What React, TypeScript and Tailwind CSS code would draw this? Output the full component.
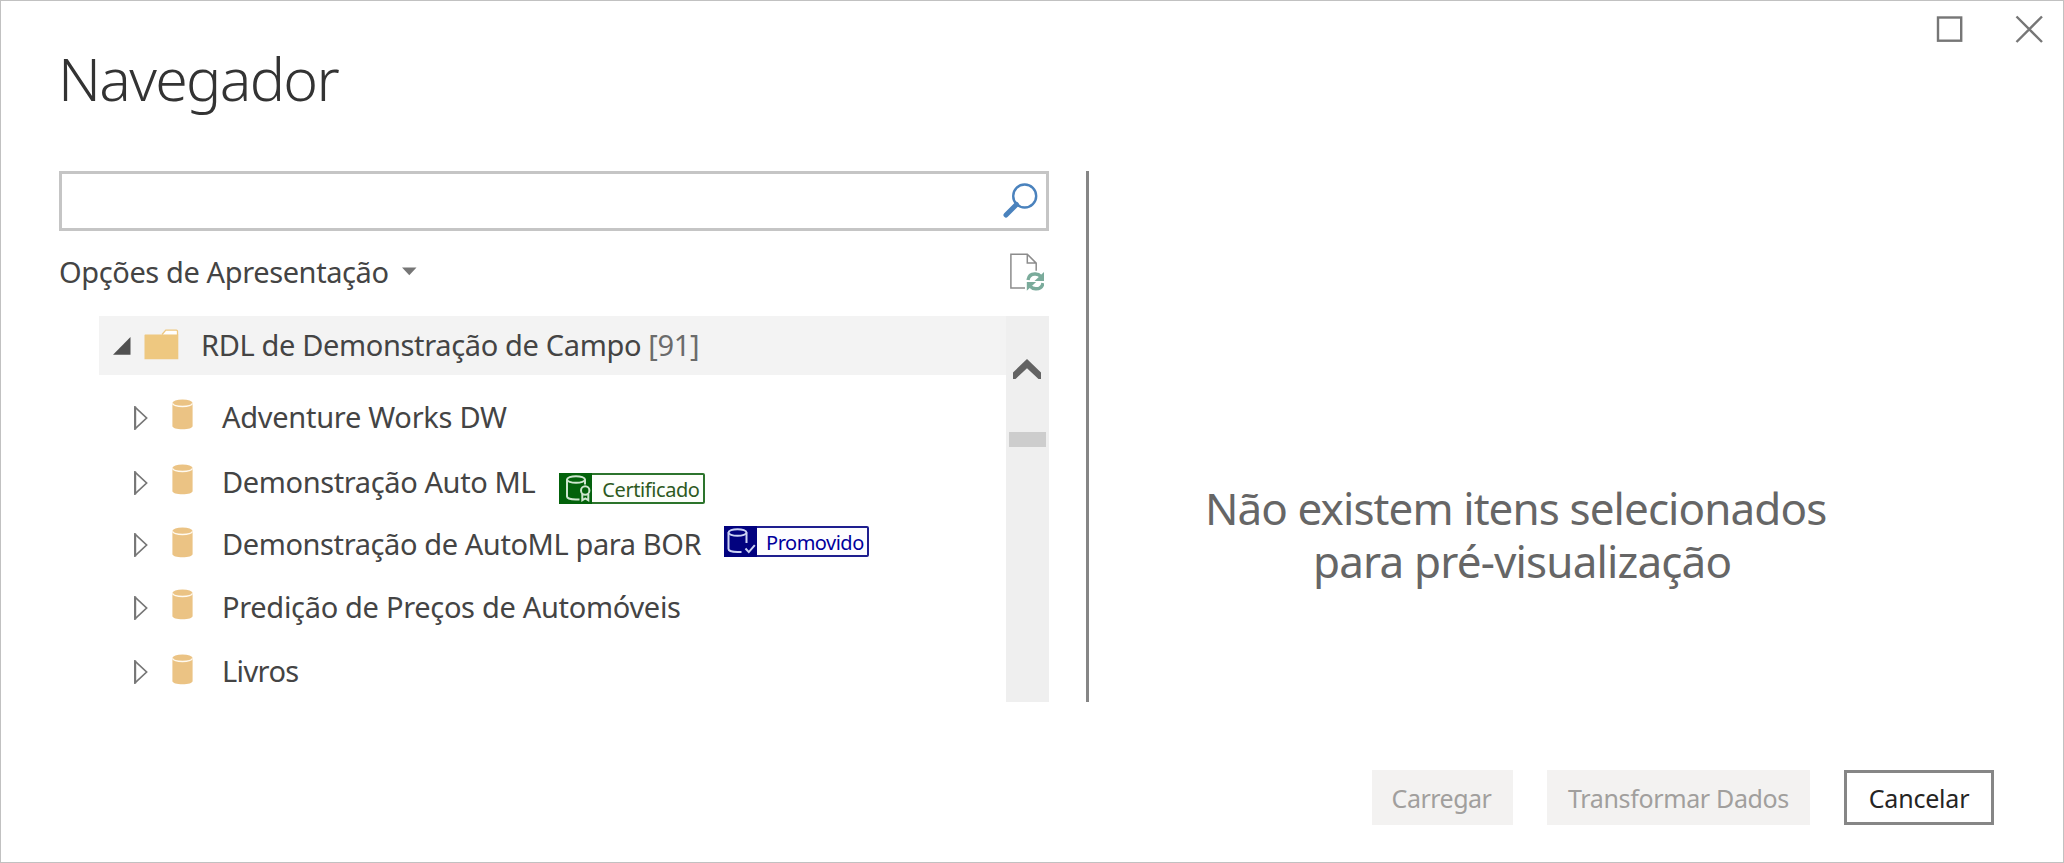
import React from "react";

type Dataset = {
  name: string;
  tracking: string;
  rowMargin: string;
  iconMargin: string;
  badge?: "certified" | "promoted";
};

const datasets: Dataset[] = [
  { name: "Adventure Works DW", tracking: "tracking-[-0.28px]", rowMargin: "mt-[13px]", iconMargin: "mb-[7px]" },
  { name: "Demonstração Auto ML", tracking: "tracking-[-0.38px]", rowMargin: "mt-[5px]", iconMargin: "mb-[7px]", badge: "certified" },
  { name: "Demonstração de AutoML para BOR", tracking: "tracking-[-0.4px]", rowMargin: "mt-[2px]", iconMargin: "mb-[5px]", badge: "promoted" },
  { name: "Predição de Preços de Automóveis", tracking: "tracking-[-0.31px]", rowMargin: "mt-[3px]", iconMargin: "mb-[7px]" },
  { name: "Livros", tracking: "tracking-[-0.6px]", rowMargin: "mt-[4px]", iconMargin: "mb-[5px]" },
];

function WindowControls() {
  return (
    <div className="mr-[20px] mt-[14px] flex h-7 items-start gap-[52px]">
      <svg width="27" height="28" viewBox="0 0 27 28" fill="none">
        <rect x="2" y="2.5" width="23.2" height="23.2" stroke="#767676" strokeWidth="2.4" />
      </svg>
      <svg width="28" height="28" viewBox="0 0 28 28" fill="none">
        <path d="M1.5 1.5 27 27M27 1.5 1.5 27" stroke="#767676" strokeWidth="2.4" />
      </svg>
    </div>
  );
}

function SearchIcon() {
  return (
    <svg width="36" height="36" viewBox="0 0 36 36" fill="none">
      <circle cx="22.7" cy="14" r="11.5" stroke="#4a82bd" strokeWidth="2.4" />
      <path d="M14.5 22.5 4 33" stroke="#4a82bd" strokeWidth="5" strokeLinecap="round" />
    </svg>
  );
}

function RefreshPageIcon() {
  return (
    <svg width="34" height="38" viewBox="0 0 34 38" fill="none">
      <path d="M15 35H.9V1.2h16.4l8.9 8.9v7.6M17.3 1.2v8.9h8.9" stroke="#8c8c8c" strokeWidth="1.5" />
      <path d="M18 27c.8-4.600 4-6.200 7.400-6 2.200.1 4 .9 5.400 2.400" stroke="#7aab9b" strokeWidth="3.4" />
      <path d="M34 19v9h-9.500z" fill="#7aab9b" />
      <path d="M33 30c-.8 4.400-4 6-7.400 5.800-2.200-.1-4-.9-5.400-2.400" stroke="#7aab9b" strokeWidth="3.4" />
      <path d="M16.800 37.800V29h9.300z" fill="#7aab9b" />
    </svg>
  );
}

function FolderIcon() {
  return (
    <svg width="35" height="31" viewBox="0 0 35 31" fill="none">
      <path d="M18 5.500 21.800 1.100h10.600c.8 0 1.100.4 1.100 1.100V6" fill="#fff" stroke="#eec880" strokeWidth="1.300" />
      <path d="M.5 6.500c0-.8.3-1 1-1h32.800v24.700H.5z" fill="#eec880" />
    </svg>
  );
}

function CylinderIcon() {
  return (
    <svg width="21" height="31" viewBox="0 0 21 31">
      <path d="M.4 4v23c0 2 4.400 3.300 10.100 3.300S20.600 29 20.600 27V4z" fill="#ebc384" />
      <ellipse cx="10.500" cy="4.100" rx="10.100" ry="3.600" fill="#ebc384" />
      <path d="M.4 4.300c.6 2 4.800 3.200 10.100 3.200s9.500-1.200 10.100-3.200" fill="none" stroke="#fffaf0" strokeWidth="1.300" />
    </svg>
  );
}

function Badge({ kind }: { kind: "certified" | "promoted" }) {
  if (kind === "certified") {
    return (
      <span className="ml-[24px] mt-[10px] flex h-[31px] w-[146px] rounded-[2px] border-2 border-[#2c742c] bg-[#fdfffb]">
        <span className="-my-0.5 -ml-0.5 h-[31px] w-[33px] shrink-0 bg-[#03620b]">
          <svg width="33" height="31" viewBox="0 0 33 31" fill="none" stroke="#cfe6cf" strokeWidth="2">
            <ellipse cx="17" cy="6.500" rx="9" ry="3.300" />
            <path d="M8 6.500v17c0 1.800 4 3 9 3h3.500M26 6.500v5" />
            <circle cx="26.200" cy="17.500" r="4.200" />
            <path d="M23.300 21v6.300l3-1.800 3 1.800V21" />
          </svg>
        </span>
        <span className="ml-[10px] mt-[3px] text-[20px] leading-6 tracking-[-0.42px] text-[#2d5a1e]">Certificado</span>
      </span>
    );
  }
  return (
    <span className="ml-[23px] flex h-[31px] w-[145px] -translate-y-1 rounded-[2px] border-2 border-[#1f1f8f] bg-[#fdfdff]">
      <span className="-my-0.5 -ml-0.5 h-[31px] w-[33px] shrink-0 bg-[#02027f]">
        <svg width="33" height="31" viewBox="0 0 33 31" fill="none" stroke="#cbd2f3" strokeWidth="2">
          <ellipse cx="13.500" cy="6.500" rx="9" ry="3.300" />
          <path d="M4.500 6.500v16.500c0 1.800 4 3 9 3h4M22.500 6.500v10.500M21.500 22.500l3.300 3.600 6-7" />
        </svg>
      </span>
      <span className="ml-[9px] mt-[3px] text-[20px] leading-6 tracking-[-0.5px] text-[#00009c]">Promovido</span>
    </span>
  );
}

function DatasetRow({ item }: { item: Dataset }) {
  return (
    <li className={`${item.rowMargin} flex h-[60px] items-center pl-[35px]`}>
      <svg width="14" height="24" viewBox="0 0 14 24" fill="none">
        <path d="M1 1.200v21.600L12.600 12z" stroke="#767676" strokeWidth="1.700" />
        <path d="M1.200.5v23" stroke="#767676" strokeWidth="2" />
      </svg>
      <span className={`${item.iconMargin} ml-[24px]`}>
        <CylinderIcon />
      </span>
      <span className={`${item.tracking} mb-[2px] ml-[29px] whitespace-nowrap`}>{item.name}</span>
      {item.badge && <Badge kind={item.badge} />}
    </li>
  );
}

function NavigatorTree() {
  return (
    <div className="ml-10 mt-[17px] flex h-[386px]">
      <div className="w-[907px] text-[29px] leading-[40px] text-[#444]">
        <div className="flex h-[59px] items-center bg-[#f3f3f3] pl-[14px]">
          <svg width="18" height="18" viewBox="0 0 18 18">
            <path d="M0 17.700 17.500 0v17.700z" fill="#505050" />
          </svg>
          <span className="mb-[3px] ml-[13px]">
            <FolderIcon />
          </span>
          <span className="mb-[2px] ml-[22px] whitespace-nowrap tracking-[-0.35px]">
            RDL de Demonstração de Campo <span className="text-[#6b6b6b]">[91]</span>
          </span>
        </div>
        <ul>
          {datasets.map((item) => (
            <DatasetRow key={item.name} item={item} />
          ))}
        </ul>
      </div>
      <div className="flex w-[43px] flex-col items-center bg-[#efefef] pt-[43px]">
        <svg width="28" height="20" viewBox="0 0 28 20" className="ml-[-1px]">
          <path d="M0 13.500 14 0l14 13.500V20h-2.500L14 9.200 2.500 20H0z" fill="#636363" />
        </svg>
        <div className="mt-[53px] h-[15px] w-[37px] bg-[#cdcdcd]" />
      </div>
    </div>
  );
}

export default function App() {
  return (
    <div className="flex h-[863px] w-[2064px] flex-col overflow-hidden border border-[#c1c1c1] bg-white font-['Noto_Sans',sans-serif]">
      <header className="flex h-[170px] justify-between">
        <h1 className="ml-[57px] mt-[37px] h-20 text-[59px] font-light leading-[80px] tracking-[-1.7px] text-[#333]">Navegador</h1>
        <WindowControls />
      </header>
      <main className="flex h-[531px]">
        <section className="ml-[58px] w-[990px]">
          <div className="flex h-[60px] items-center justify-end border-[3px] border-[#c5c5c5] pb-[2px] pr-2">
            <SearchIcon />
          </div>
          <div className="mt-[20px] flex h-[48px] items-center text-[29px] leading-[40px] text-[#444]">
            <span className="-mt-[6px] tracking-[-0.39px]">Opções de Apresentação</span>
            <svg width="15" height="9" viewBox="0 0 15 9" className="-mt-[8px] ml-[13px]">
              <path d="M0 .5h14.500L7.300 8.200z" fill="#767676" />
            </svg>
            <span className="-mt-[6px] ml-auto mr-[5px]">
              <RefreshPageIcon />
            </span>
          </div>
          <NavigatorTree />
        </section>
        <div className="ml-[37px] w-[3px] bg-[#868686]" />
        <section className="flex flex-1 flex-col pl-[116px] pt-[311px] text-[44px] leading-[53px] text-[#666]">
          <p className="whitespace-nowrap tracking-[-0.91px]">Não existem itens selecionados</p>
          <p className="whitespace-nowrap pl-[108px] tracking-[-0.83px]">para pré-visualização</p>
        </section>
      </main>
      <footer className="mr-[69px] mt-[68px] flex justify-end gap-[34px] text-[25px] leading-[34px]">
        <button className="h-[55px] w-[141px] bg-[#f3f2f1] pr-[2px] pt-[1px] tracking-[-0.5px] text-[#a19f9d]">Carregar</button>
        <button className="h-[55px] w-[263px] bg-[#f3f2f1] pt-[1px] tracking-[-0.35px] text-[#a19f9d]">Transformar Dados</button>
        <button className="h-[55px] w-[150px] border-[3px] border-[#868686] pt-[1px] tracking-[-0.2px] text-[#252423]">Cancelar</button>
      </footer>
    </div>
  );
}
